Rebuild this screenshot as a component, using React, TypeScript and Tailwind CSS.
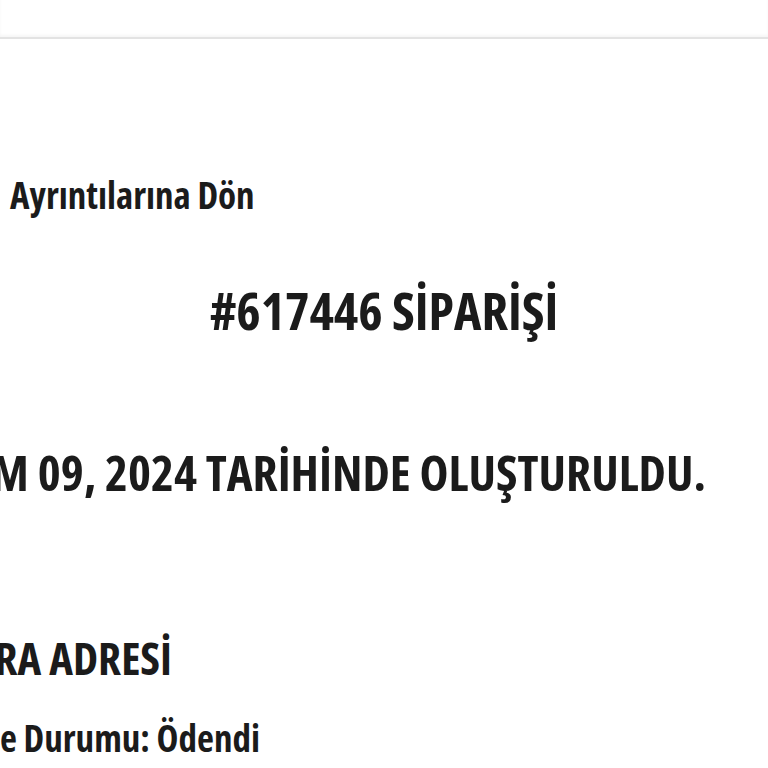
export default function App() {
  return (
    <div className="min-h-screen w-full overflow-hidden bg-white font-['Open_Sans',sans-serif] font-bold font-stretch-condensed text-[#1b1b1b]">
      {/* top bar */}
      <div className="h-[39px] w-full border-b-2 border-[#e3e3e3] shadow-[0_-2px_3px_rgba(0,0,0,0.04)_inset]" />

      <div className="flex flex-col pt-[137px]">
        <a className="ml-[10px] whitespace-nowrap text-[37px] leading-none">Ayrıntılarına Dön</a>

        <h1 className="mt-[71px] text-center text-[52px] leading-none whitespace-nowrap">#617446 SİPARİŞİ</h1>

        {/* lines run off the left edge, right ends kept where the reference has them */}
        <div className="mt-[112px] flex w-[706px] justify-end">
          <h2 className="shrink-0 whitespace-nowrap text-[49px] leading-none">
            KASIM 09, 2024 TARİHİNDE OLUŞTURULDU.
          </h2>
        </div>

        <div className="mt-[138px] flex w-[172px] justify-end">
          <h3 className="shrink-0 whitespace-nowrap text-[45px] leading-none">FATURA ADRESİ</h3>
        </div>

        <div className="mt-[39px] flex w-[260px] justify-end">
          <p className="shrink-0 whitespace-nowrap text-[37px] leading-none">Ödeme Durumu: Ödendi</p>
        </div>
      </div>
    </div>
  );
}
